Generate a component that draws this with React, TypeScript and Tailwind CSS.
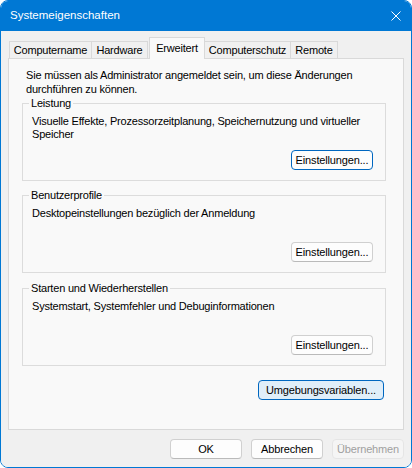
import React from "react";

interface GroupProps {
  title: string;
  text: React.ReactNode;
  focused?: boolean;
  className?: string;
}

const WinButton = ({
  children,
  className = "",
  variant = "normal",
}: {
  children: React.ReactNode;
  className?: string;
  variant?: "normal" | "focused" | "default" | "disabled";
}) => {
  const look =
    variant === "focused"
      ? "border-[#0067c0] bg-[#fdfdfd] text-black"
      : variant === "default"
      ? "border-[#0067c0] bg-[#e0eef9] text-black"
      : variant === "disabled"
      ? "border-[#e5e5e5] bg-[#f5f5f5] text-[#a0a0a0]"
      : "border-[#d0d0d0] border-b-[#bababa] bg-[#fdfdfd] text-black";
  return (
    <button
      className={`flex h-[20px] items-center justify-center whitespace-nowrap rounded-[4px] border text-[11px] leading-none tracking-[-0.15px] ${look} ${className}`}
    >
      {children}
    </button>
  );
};

const Group = ({ title, text, focused, className = "" }: GroupProps) => {
  return (
    <fieldset
      className={`border border-[#dcdcdc] pl-[6px] pr-[12px] pb-[10px] ${className}`}
    >
      <legend className="px-[2px] text-[11px] leading-[15px]">{title}</legend>
      <div className="flex h-[59px] flex-col">
        <p className="whitespace-nowrap pt-[4px] pl-[3px] text-[11px] leading-[13px]">
          {text}
        </p>
        <WinButton
          variant={focused ? "focused" : "normal"}
          className="mt-auto w-[82px] self-end"
        >
          Einstellungen...
        </WinButton>
      </div>
    </fieldset>
  );
};

const tabs = [
  { label: "Computername", w: "w-[83px]", cls: "" },
  { label: "Hardware", w: "w-[57px]", cls: "-ml-px" },
  { label: "Erweitert", w: "w-[56px]", cls: "ml-[1px]", active: true },
  { label: "Computerschutz", w: "w-[87px]", cls: "-ml-px" },
  { label: "Remote", w: "w-[48px]", cls: "-ml-px" },
];

export default function App() {
  return (
    <div className="h-[468px] w-[412px] bg-white font-['Liberation_Sans',Arial,sans-serif] tracking-[-0.2px] text-black">
      <div className="flex h-full w-full flex-col overflow-hidden rounded-[8px] border border-[#0078d4]">
        {/* title bar */}
        <div className="flex h-[30px] shrink-0 items-center justify-between bg-[#0078d4] pl-[9px] pr-[9px] text-white">
          <span className="text-[11.5px] tracking-normal">Systemeigenschaften</span>
          <svg width="10" height="10" viewBox="0 0 10 10" className="mr-[1px]">
            <path d="M0.5 0.5L9.5 9.5M9.5 0.5L0.5 9.5" stroke="white" strokeWidth="1" />
          </svg>
        </div>

        <div className="flex flex-1 flex-col bg-[#f0f0f0] px-[7px] pt-[6px]">
          {/* tabs */}
          <div className="flex h-[21px] items-end pl-[1px]">
            {tabs.map((t) =>
              t.active ? (
                <div
                  key={t.label}
                  className={`relative -mb-px flex h-[22px] items-center justify-center border border-b-0 border-[#d9d9d9] bg-[#f9f9f9] text-[11px] ${t.w} ${t.cls}`}
                >
                  {t.label}
                </div>
              ) : (
                <div
                  key={t.label}
                  className={`flex h-[17px] items-center justify-center border border-b-0 border-[#d9d9d9] bg-[#f0f0f0] text-[11px] ${t.w} ${t.cls}`}
                >
                  {t.label}
                </div>
              )
            )}
          </div>

          {/* panel */}
          <div className="flex h-[372px] flex-col border border-[#d9d9d9] bg-[#f9f9f9] pl-[13px] pr-[17px] pt-[9px]">
            <p className="whitespace-nowrap pl-[4px] text-[11px] leading-[14px]">
              Sie müssen als Administrator angemeldet sein, um diese Änderungen
              <br />
              durchführen zu können.
            </p>
            <Group
              className="mt-[0px]"
              title="Leistung"
              focused
              text={
                <>
                  Visuelle Effekte, Prozessorzeitplanung, Speichernutzung und
                  virtueller
                  <br />
                  Speicher
                </>
              }
            />
            <Group
              className="mt-[7px]"
              title="Benutzerprofile"
              text="Desktopeinstellungen bezüglich der Anmeldung"
            />
            <Group
              className="mt-[8px]"
              title="Starten und Wiederherstellen"
              text="Systemstart, Systemfehler und Debuginformationen"
            />
            <WinButton variant="default" className="mr-[2px] mt-[14px] w-[126px] self-end">
              Umgebungsvariablen...
            </WinButton>
          </div>

          {/* bottom buttons */}
          <div className="flex justify-end gap-[9px] pt-[9px]">
            <WinButton className="w-[72px]">OK</WinButton>
            <WinButton className="w-[72px]">Abbrechen</WinButton>
            <WinButton variant="disabled" className="w-[72px]">
              Übernehmen
            </WinButton>
          </div>
        </div>
      </div>
    </div>
  );
}
